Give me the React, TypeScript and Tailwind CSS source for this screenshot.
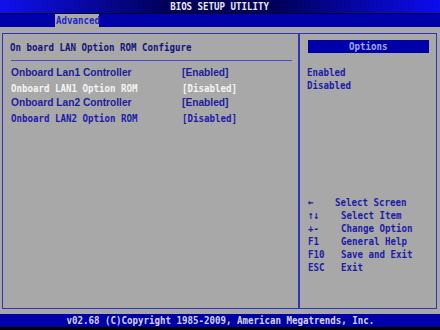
import React from "react";

const M = ({ children, className = "" }: { children: React.ReactNode; className?: string }) => (
  <span
    className={
      "inline-block scale-x-[0.83] whitespace-pre font-['DejaVu_Sans_Mono',monospace] text-[11px] font-bold leading-none " +
      (className.includes("origin-center") ? "" : "origin-left ") +
      className
    }
  >
    {children}
  </span>
);

const B = ({ children }: { children: React.ReactNode }) => (
  <span className="font-['Liberation_Sans',Arial,sans-serif] text-[10.2px] font-bold leading-none text-[#1c1c9c]">
    {children}
  </span>
);

export default function App() {
  const help: [string, string, number][] = [
    ["←", "Select Screen", 27],
    ["↑↓", "Select Item", 33],
    ["+-", "Change Option", 33],
    ["F1", "General Help", 33],
    ["F10", "Save and Exit", 33],
    ["ESC", "Exit", 33],
  ];
  return (
    <div className="flex h-[330px] w-[440px] flex-col overflow-hidden bg-black leading-none">
      <div className="flex h-[13px] items-center justify-center bg-[linear-gradient(to_right,#1010f0_0%,#000058_38%,#000058_62%,#0c0cf0_100%)]">
        <M className="origin-center text-[#e8e8f0]">BIOS SETUP UTILITY</M>
      </div>
      <div className="h-px bg-[#000030]" />
      <div className="flex h-[13px] bg-[#0000a8] pl-[55px]">
        <div className="flex w-[44px] items-center bg-[#a8a8a8] pl-[1px]">
          <M className="text-[#2424c8]">Advanced</M>
        </div>
      </div>
      <div className="h-[287px] bg-[#a8a8a8] pl-[2px] pr-[3px] pt-[6px]">
        <div className="flex h-[276px]">
          <div className="w-[297px] border border-[#3232c0]">
            <div className="mt-[6px] flex h-[14px] items-center pl-[7px]">
              <M className="text-[#14147c]">On board LAN Option ROM Configure</M>
            </div>
            <div className="ml-[8px] mt-[6px] h-px w-[281px] bg-[#4a4ad0]" />
            <div className="mt-[5px] flex flex-col pl-[8px]">
              <div className="flex h-[15px] items-center">
                <div className="flex w-[171px] items-center"><B>Onboard Lan1 Controller</B></div>
                <B>[Enabled]</B>
              </div>
              <div className="flex h-[15px] items-center">
                <div className="flex w-[171px] items-center"><M className="text-[#f4f4f4]">Onboard LAN1 Option ROM</M></div>
                <M className="text-[#f4f4f4]">[Disabled]</M>
              </div>
              <div className="flex h-[15px] items-center">
                <div className="flex w-[171px] items-center"><B>Onboard Lan2 Controller</B></div>
                <B>[Enabled]</B>
              </div>
              <div className="flex h-[15px] items-center">
                <div className="flex w-[171px] items-center"><M className="text-[#1c1ca8]">Onboard LAN2 Option ROM</M></div>
                <M className="text-[#1c1ca8]">[Disabled]</M>
              </div>
            </div>
          </div>
          <div className="flex-1 border border-[#3232c0]">
            <div className="ml-[8px] mr-[7px] mt-[6px] flex h-[13px] items-center justify-center bg-[#0000a8]">
              <M className="origin-center text-[#a4a4e4]">Options</M>
            </div>
            <div className="mt-[13px] flex flex-col pl-[7px]">
              <div className="flex h-[13px] items-center"><M className="text-[#1c1ca8]">Enabled</M></div>
              <div className="flex h-[13px] items-center"><M className="text-[#1c1ca8]">Disabled</M></div>
            </div>
            <div className="mt-[104px] flex flex-col pl-[8px]">
              {help.map(([k, d, w]) => (
                <div key={k} className="flex h-[13px] items-center">
                  <div style={{ width: w }} className="flex shrink-0 items-center"><M className="text-[#1c1ca8]">{k}</M></div>
                  <M className="text-[#1c1ca8]">{d}</M>
                </div>
              ))}
            </div>
          </div>
        </div>
      </div>
      <div className="flex h-[13px] items-center justify-center bg-[#0000a8]">
        <M className="origin-center text-[#d4d4ec]">v02.68 (C)Copyright 1985-2009, American Megatrends, Inc.</M>
      </div>
    </div>
  );
}
